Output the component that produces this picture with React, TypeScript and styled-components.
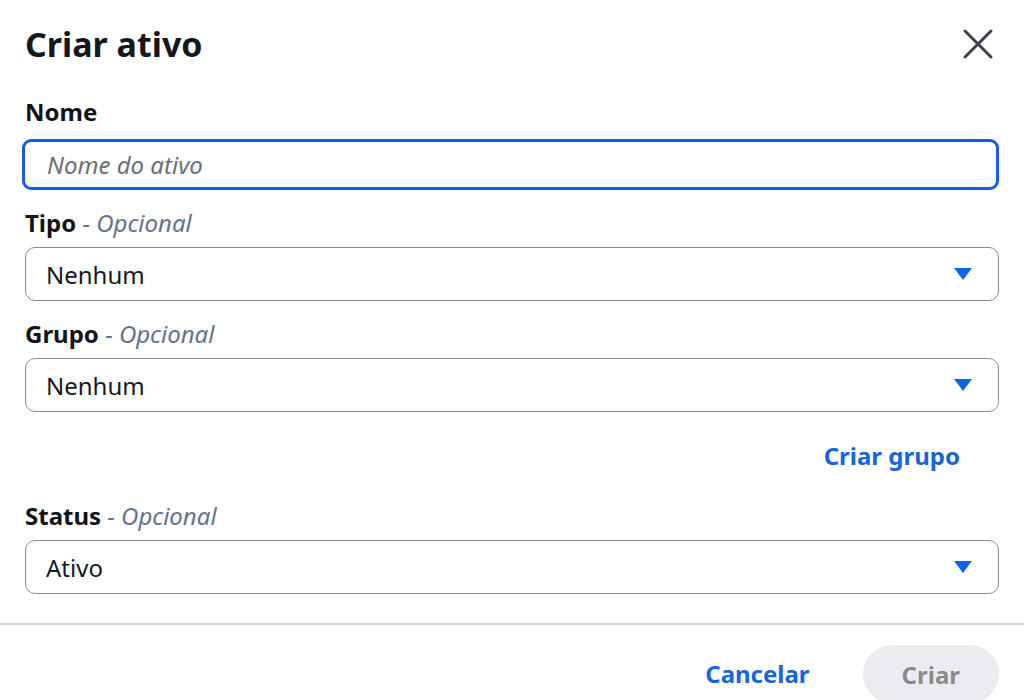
import React from "react";
import styled, { createGlobalStyle } from "styled-components";

const GlobalStyle = createGlobalStyle`
  html, body {
    margin: 0;
    padding: 0;
    background: #ffffff;
    font-family: "Noto Sans", "Open Sans", sans-serif;
    color: #15181d;
  }
  * {
    box-sizing: border-box;
  }
`;

const Modal = styled.div`
  width: 1024px;
  height: 700px;
  overflow: hidden;
  background: #ffffff;
  display: flex;
  flex-direction: column;
`;

const Body = styled.div`
  padding: 24px 25px 0 25px;
  display: flex;
  flex-direction: column;
`;

const Header = styled.div`
  display: flex;
  align-items: center;
  justify-content: space-between;
  height: 40px;
  margin-bottom: 33px;
`;

const Title = styled.h1`
  margin: 0;
  font-size: 34px;
  line-height: 40px;
  font-weight: 700;
  color: #15181d;
`;

const CloseButton = styled.button`
  border: none;
  background: none;
  padding: 0;
  margin-right: 5px;
  width: 32px;
  height: 32px;
  display: flex;
  align-items: center;
  justify-content: center;
  cursor: pointer;
`;

const Field = styled.div<{ $spaced?: boolean }>`
  display: flex;
  flex-direction: column;
  margin-top: ${(p) => (p.$spaced ? "18px" : "0")};
`;

const Label = styled.label`
  font-size: 24px;
  line-height: 30px;
  font-weight: 700;
  color: #111418;
  margin-bottom: 9px;
`;

const Optional = styled.span`
  font-weight: 400;
  font-style: italic;
  color: #64728a;
`;

const TextInput = styled.input`
  height: 51px;
  margin: 3px 0 0 -3px;
  width: calc(100% + 3px);
  border: 3px solid #1a5ce6;
  border-radius: 9px;
  padding: 0 22px;
  font-family: inherit;
  font-size: 24px;
  color: #15181d;
  outline: none;

  &::placeholder {
    font-style: italic;
    color: #6b6e73;
  }
`;

const SelectBox = styled.div`
  height: 54px;
  border: 1px solid #8c8c8e;
  border-radius: 10px;
  padding: 0 26px 0 20px;
  display: flex;
  align-items: center;
  justify-content: space-between;
  font-size: 24px;
  color: #15181d;
  cursor: pointer;
`;

const Caret = styled.span`
  width: 0;
  height: 0;
  border-left: 9px solid transparent;
  border-right: 9px solid transparent;
  border-top: 12px solid #0b66e4;
`;

const LinkRow = styled.div`
  display: flex;
  justify-content: flex-end;
  padding: 29px 39px 12px 0;
`;

const LinkButton = styled.button`
  border: none;
  background: none;
  padding: 0;
  font-family: inherit;
  font-size: 24px;
  line-height: 30px;
  font-weight: 700;
  color: #1466d9;
  cursor: pointer;
`;

const Divider = styled.hr`
  border: none;
  border-top: 2px solid #d4d4d6;
  margin: 29px 0 0 0;
`;

const Footer = styled.div`
  display: flex;
  justify-content: flex-end;
  align-items: center;
  gap: 53px;
  padding: 20px 25px 0 0;
`;

const PrimaryButton = styled.button`
  height: 58px;
  border: none;
  border-radius: 29px;
  padding: 0 39px;
  background: #ececf0;
  color: #8a8a8e;
  font-family: inherit;
  font-size: 24px;
  font-weight: 700;
`;

const CloseIcon = () => (
  <svg width="32" height="32" viewBox="0 0 32 32">
    <path
      d="M3 3 L29 29 M29 3 L3 29"
      stroke="#3d4046"
      strokeWidth="3"
      strokeLinecap="round"
      fill="none"
    />
  </svg>
);

interface SelectProps {
  label: string;
  value: string;
  spaced?: boolean;
}

const SelectField = ({ label, value, spaced }: SelectProps) => (
  <Field $spaced={spaced}>
    <Label>
      {label} <Optional>- Opcional</Optional>
    </Label>
    <SelectBox>
      <span>{value}</span>
      <Caret />
    </SelectBox>
  </Field>
);

const App = () => {
  return (
    <>
      <GlobalStyle />
      <Modal>
        <Body>
          <Header>
            <Title>Criar ativo</Title>
            <CloseButton aria-label="Fechar">
              <CloseIcon />
            </CloseButton>
          </Header>

          <Field>
            <Label>Nome</Label>
            <TextInput placeholder="Nome do ativo" />
          </Field>

          <SelectField label="Tipo" value="Nenhum" spaced />
          <SelectField label="Grupo" value="Nenhum" spaced />

          <LinkRow>
            <LinkButton>Criar grupo</LinkButton>
          </LinkRow>

          <SelectField label="Status" value="Ativo" spaced />
        </Body>

        <Divider />

        <Footer>
          <LinkButton>Cancelar</LinkButton>
          <PrimaryButton disabled>Criar</PrimaryButton>
        </Footer>
      </Modal>
    </>
  );
};

export default App;
